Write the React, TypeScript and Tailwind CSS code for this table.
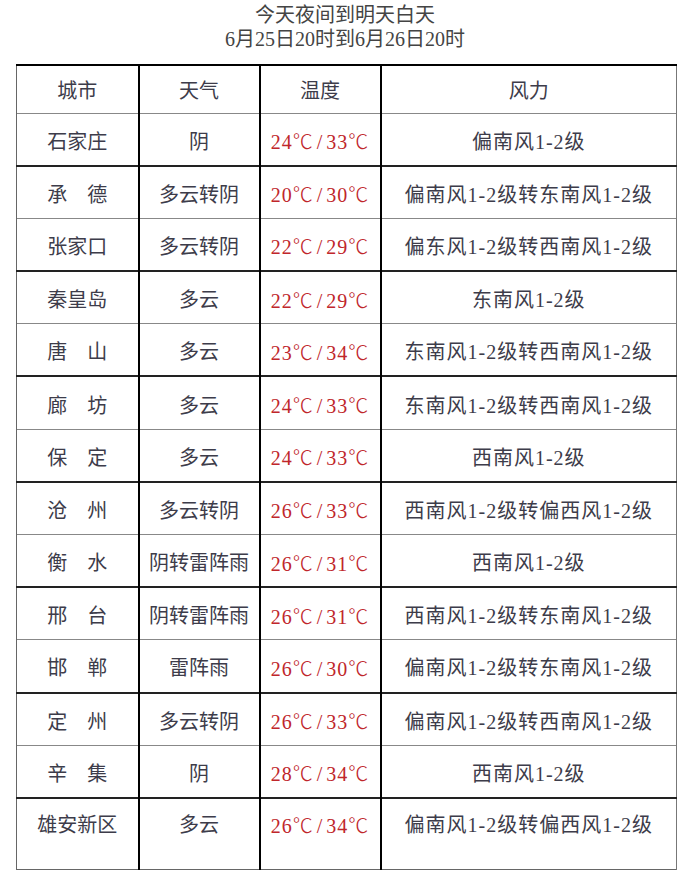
import React from 'react';

const rows = [
  { city: '石家庄', weather: '阴', temp: ['24', '33'], wind: '偏南风1-2级' },
  { city: '承　德', weather: '多云转阴', temp: ['20', '30'], wind: '偏南风1-2级转东南风1-2级' },
  { city: '张家口', weather: '多云转阴', temp: ['22', '29'], wind: '偏东风1-2级转西南风1-2级' },
  { city: '秦皇岛', weather: '多云', temp: ['22', '29'], wind: '东南风1-2级' },
  { city: '唐　山', weather: '多云', temp: ['23', '34'], wind: '东南风1-2级转西南风1-2级' },
  { city: '廊　坊', weather: '多云', temp: ['24', '33'], wind: '东南风1-2级转西南风1-2级' },
  { city: '保　定', weather: '多云', temp: ['24', '33'], wind: '西南风1-2级' },
  { city: '沧　州', weather: '多云转阴', temp: ['26', '33'], wind: '西南风1-2级转偏西风1-2级' },
  { city: '衡　水', weather: '阴转雷阵雨', temp: ['26', '31'], wind: '西南风1-2级' },
  { city: '邢　台', weather: '阴转雷阵雨', temp: ['26', '31'], wind: '西南风1-2级转东南风1-2级' },
  { city: '邯　郸', weather: '雷阵雨', temp: ['26', '30'], wind: '偏南风1-2级转东南风1-2级' },
  { city: '定　州', weather: '多云转阴', temp: ['26', '33'], wind: '偏南风1-2级转西南风1-2级' },
  { city: '辛　集', weather: '阴', temp: ['28', '34'], wind: '西南风1-2级' },
  { city: '雄安新区', weather: '多云', temp: ['26', '34'], wind: '偏南风1-2级转偏西风1-2级' },
];

const font = { fontFamily: '"Liberation Serif", "Noto Sans CJK SC", serif' };

function Deg() {
  return <span className="[font-family:'Noto_Sans_CJK_SC',sans-serif] font-light">℃</span>;
}

export default function App() {
  return (
    <div className="w-[690px] h-[892px] bg-white text-[#3d3c4a]" style={font}>
      <div className="pt-[3px] text-center text-[20px] leading-[24px] text-[#444]">
        <div>今天夜间到明天白天</div>
        <div>6月25日20时到6月26日20时</div>
      </div>
      <div className="pl-4 pt-[13px]">
        <table className="w-[661px] border-collapse table-fixed text-[20px]">
          <colgroup>
            <col className="w-[122px]" />
            <col className="w-[121px]" />
            <col className="w-[121px]" />
            <col />
          </colgroup>
          <thead>
            <tr className="h-[48px] border-t-2 border-black">
              <th className="font-normal pt-1 border-l border-[#666] border-r-2 border-r-black">城市</th>
              <th className="font-normal pt-1 border-r-2 border-black">天气</th>
              <th className="font-normal pt-1 border-r-2 border-black">温度</th>
              <th className="font-normal pt-1 border-r border-[#777]">风力</th>
            </tr>
          </thead>
          <tbody>
            {rows.map((r, i) => {
              const last = i === rows.length - 1;
              const pad = last ? 'align-top pt-[11px]' : 'pt-[5px]';
              return (
                <tr
                  key={i}
                  className={
                    (last ? 'h-[72px] border-b border-b-[#666] ' : 'h-[52.7px] ') +
                    (i % 2 === 1 ? 'border-t-2 border-t-[#222]' : 'border-t border-t-[#888]')
                  }
                >
                  <td className={'text-center border-l border-[#666] border-r-2 border-r-black ' + pad}>
                    {r.city}
                  </td>
                  <td className={'text-center border-r-2 border-black ' + pad}>{r.weather}</td>
                  <td className={'text-center whitespace-nowrap tracking-[1px] text-[#c0262b] border-r-2 border-black ' + pad}>
                    {r.temp[0]}
                    <Deg />
                    <span className="mx-[3px]">/</span>
                    {r.temp[1]}
                    <Deg />
                  </td>
                  <td className={'text-center whitespace-nowrap tracking-[1px] border-r border-[#777] ' + pad}>{r.wind}</td>
                </tr>
              );
            })}
          </tbody>
        </table>
      </div>
    </div>
  );
}
